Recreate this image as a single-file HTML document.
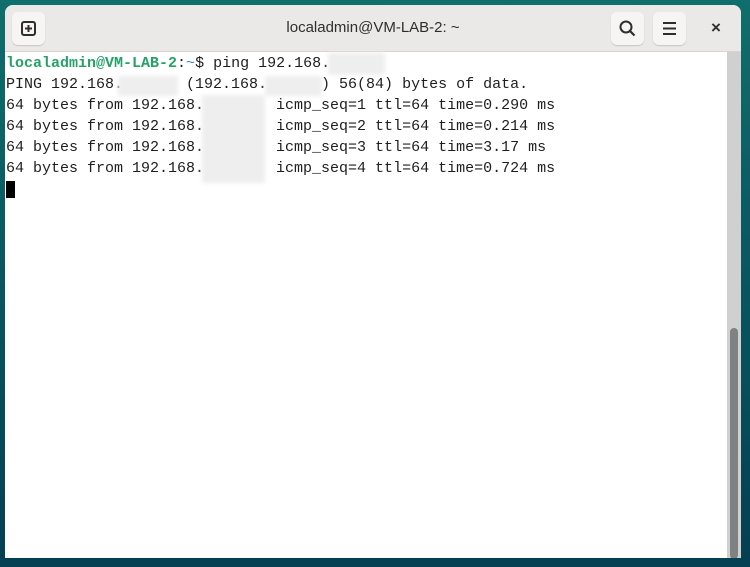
<!DOCTYPE html>
<html><head><style>
html,body{margin:0;padding:0;width:750px;height:567px;overflow:hidden}
body{background:linear-gradient(180deg,#0f6f6c 0%,#0a5a62 40%,#053f52 100%);position:relative;font-family:"Liberation Sans",sans-serif}
.win{position:absolute;left:5px;top:5px;width:736px;height:553px;background:#fff;border-radius:8px 8px 0 0;overflow:hidden}
.hdr{height:46px;background:#ebe9e7;border-bottom:1px solid #d6d3d0;position:relative}
.btn{position:absolute;top:7px;width:33px;height:33px;background:#f6f5f4;border-radius:6px;box-shadow:0 1px 1px rgba(0,0,0,.15)}
.title{position:absolute;left:0;right:0;top:14px;text-align:center;font-size:15px;color:#2e2e2e}
.term{position:absolute;left:1px;top:48px;font-family:"Liberation Mono","DejaVu Sans Mono",monospace;font-size:15px;line-height:21px;color:#1e1e1e;white-space:pre}
.g{color:#26a269;font-weight:bold}
.b{color:#3584e4}
.blur{position:absolute;background:#eeeeee;filter:blur(2px)}
.sb{position:absolute;left:722px;top:47px;width:14px;height:506px;background:#d0d0d0}
.thumb{position:absolute;left:725px;top:323px;width:8px;height:231px;background:#7f8182;border-radius:4px}
</style></head><body>
<div class="win">
<div class="hdr">
<div class="btn" style="left:7px"><svg width="33" height="33"><rect x="10" y="10" width="13" height="13" rx="2" fill="none" stroke="#2e2e2e" stroke-width="2"/><path d="M16.5 13v7M13 16.5h7" stroke="#2e2e2e" stroke-width="2"/></svg></div>
<div class="title">localadmin@VM-LAB-2: ~</div>
<div class="btn" style="left:606px"><svg width="33" height="33"><circle cx="15" cy="15" r="5.5" fill="none" stroke="#2e2e2e" stroke-width="2"/><path d="M19 19l4.5 4.5" stroke="#2e2e2e" stroke-width="2.2"/></svg></div>
<div class="btn" style="left:648px"><svg width="33" height="33"><path d="M10 11h13M10 16.5h13M10 22h13" stroke="#2e2e2e" stroke-width="2"/></svg></div>
<div style="position:absolute;left:706px;top:13px;font-size:17px;color:#2e2e2e;font-weight:bold">×</div>
</div>
<div class="term"><span class="g">localadmin@VM-LAB-2</span>:<span class="b">~</span>$ ping 192.168.
PING 192.168.       (192.168.      ) 56(84) bytes of data.
64 bytes from 192.168.        icmp_seq=1 ttl=64 time=0.290 ms
64 bytes from 192.168.        icmp_seq=2 ttl=64 time=0.214 ms
64 bytes from 192.168.        icmp_seq=3 ttl=64 time=3.17 ms
64 bytes from 192.168.        icmp_seq=4 ttl=64 time=0.724 ms
<span style="background:#000">&nbsp;</span></div>
<div class="blur" style="left:323px;top:48px;width:57px;height:22px"></div>
<div class="blur" style="left:113px;top:71px;width:60px;height:20px"></div>
<div class="blur" style="left:260px;top:71px;width:57px;height:20px"></div>
<div class="blur" style="left:197px;top:90px;width:63px;height:88px"></div>
<div class="sb"></div>
<div class="thumb"></div>
</div>
</body></html>
